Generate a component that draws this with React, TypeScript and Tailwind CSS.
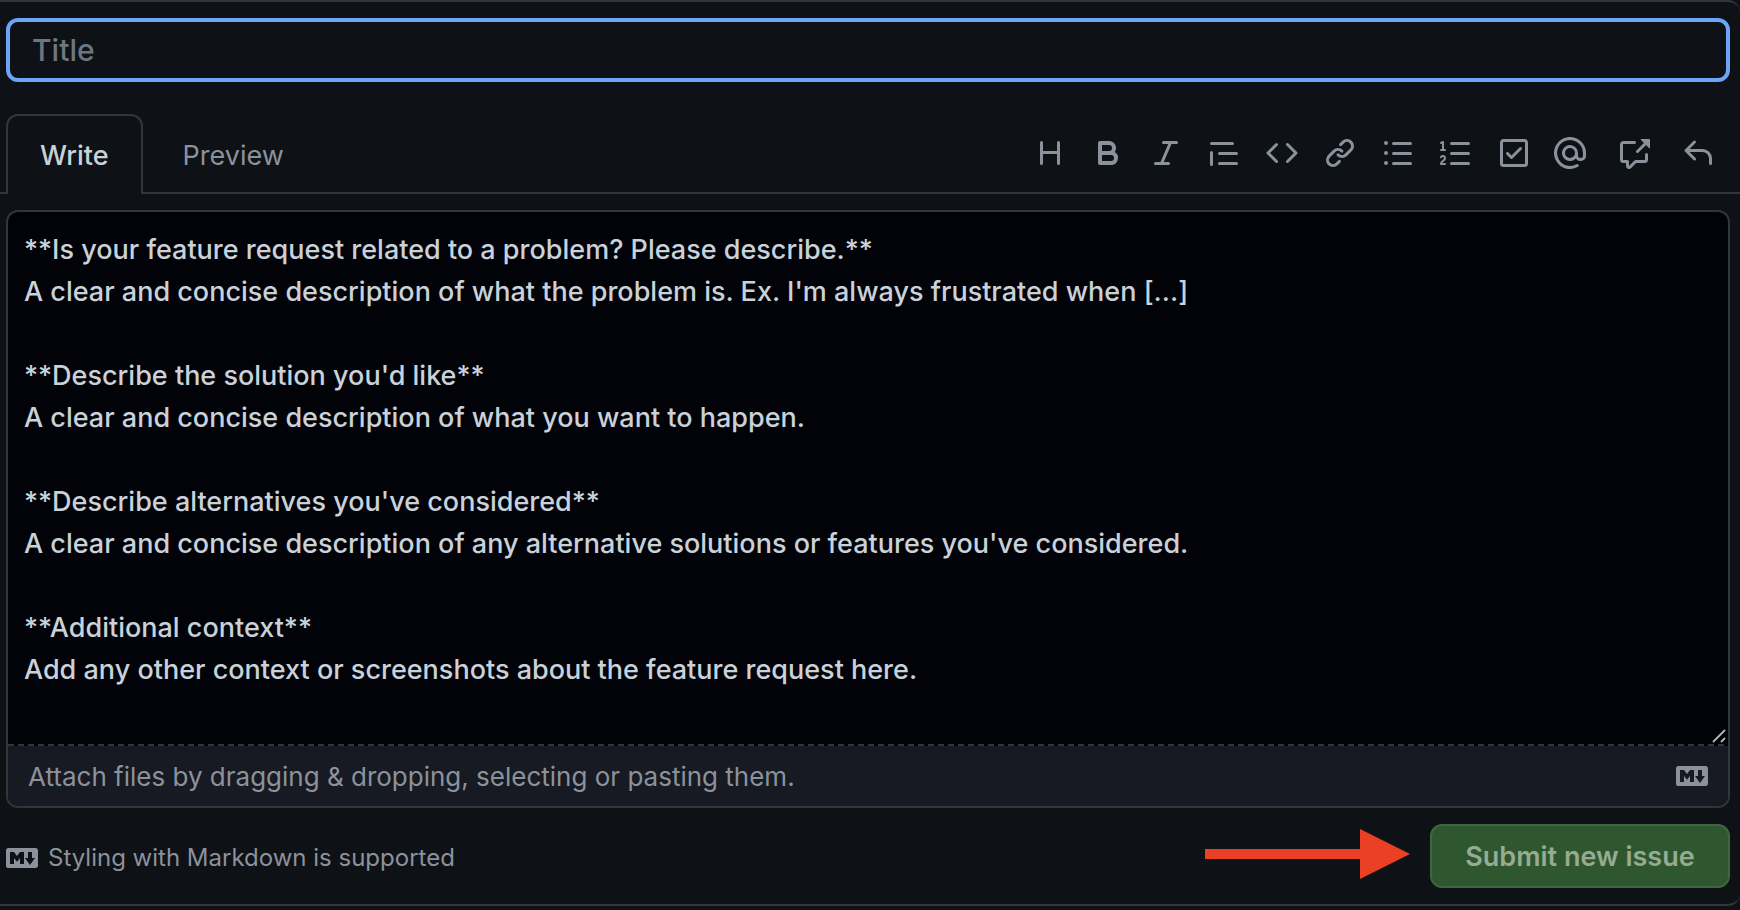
import React from "react";

const icons = {
  heading:
    "M3.75 2a.75.75 0 0 1 .75.75V7h7V2.75a.75.75 0 0 1 1.5 0v10.5a.75.75 0 0 1-1.5 0V8.5h-7v4.75a.75.75 0 0 1-1.5 0V2.75A.75.75 0 0 1 3.75 2Z",
  bold: "M4 2h4.5a3.501 3.501 0 0 1 2.852 5.53A3.499 3.499 0 0 1 9.5 14H4a1 1 0 0 1-1-1V3a1 1 0 0 1 1-1Zm1 7v3h4.5a1.5 1.5 0 0 0 0-3Zm3.5-2a1.5 1.5 0 0 0 0-3H5v3Z",
  italic:
    "M6 2.75A.75.75 0 0 1 6.75 2h6.5a.75.75 0 0 1 0 1.5h-2.505l-3.858 9H9.25a.75.75 0 0 1 0 1.5h-6.5a.75.75 0 0 1 0-1.5h2.505l3.858-9H6.75A.75.75 0 0 1 6 2.75Z",
  quote:
    "M1.75 2.5h10.5a.75.75 0 0 1 0 1.5H1.75a.75.75 0 0 1 0-1.5Zm4 5h8.5a.75.75 0 0 1 0 1.5h-8.5a.75.75 0 0 1 0-1.5Zm0 5h8.5a.75.75 0 0 1 0 1.5h-8.5a.75.75 0 0 1 0-1.5ZM2.5 7.75v6a.75.75 0 0 1-1.5 0v-6a.75.75 0 0 1 1.5 0Z",
  code: "m11.28 3.22 4.25 4.25a.75.75 0 0 1 0 1.06l-4.25 4.25a.749.749 0 0 1-1.275-.326.749.749 0 0 1 .215-.734L13.94 8l-3.72-3.72a.749.749 0 0 1 .326-1.275.749.749 0 0 1 .734.215Zm-6.56 0a.751.751 0 0 1 1.042.018.751.751 0 0 1 .018 1.042L2.06 8l3.72 3.72a.749.749 0 0 1-.326 1.275.749.749 0 0 1-.734-.215L.47 8.53a.75.75 0 0 1 0-1.06Z",
  link: "m7.775 3.275 1.25-1.25a3.5 3.5 0 1 1 4.95 4.95l-2.5 2.5a3.5 3.5 0 0 1-4.95 0 .751.751 0 0 1 .018-1.042.751.751 0 0 1 1.042-.018 1.998 1.998 0 0 0 2.83 0l2.5-2.5a2.002 2.002 0 0 0-2.83-2.83l-1.25 1.25a.751.751 0 0 1-1.042-.018.751.751 0 0 1-.018-1.042Zm-4.69 9.64a1.998 1.998 0 0 0 2.83 0l1.25-1.25a.751.751 0 0 1 1.042.018.751.751 0 0 1 .018 1.042l-1.25 1.25a3.5 3.5 0 1 1-4.95-4.95l2.5-2.5a3.5 3.5 0 0 1 4.95 0 .751.751 0 0 1-.018 1.042.751.751 0 0 1-1.042.018 1.998 1.998 0 0 0-2.83 0l-2.5 2.5a1.998 1.998 0 0 0 0 2.83Z",
  bullets:
    "M5.75 2.5h8.5a.75.75 0 0 1 0 1.5h-8.5a.75.75 0 0 1 0-1.5Zm0 5h8.5a.75.75 0 0 1 0 1.5h-8.5a.75.75 0 0 1 0-1.5Zm0 5h8.5a.75.75 0 0 1 0 1.5h-8.5a.75.75 0 0 1 0-1.5ZM2 14a1 1 0 1 1 0-2 1 1 0 0 1 0 2Zm1-6a1 1 0 1 1-2 0 1 1 0 0 1 2 0ZM2 4a1 1 0 1 1 0-2 1 1 0 0 1 0 2Z",
  numbers:
    "M5 3.25a.75.75 0 0 1 .75-.75h8.5a.75.75 0 0 1 0 1.5h-8.5A.75.75 0 0 1 5 3.25Zm0 5a.75.75 0 0 1 .75-.75h8.5a.75.75 0 0 1 0 1.5h-8.5A.75.75 0 0 1 5 8.25Zm0 5a.75.75 0 0 1 .75-.75h8.5a.75.75 0 0 1 0 1.5h-8.5a.75.75 0 0 1-.75-.75ZM.924 10.32a.5.5 0 0 1-.851-.525l.001-.001.001-.002.002-.004.007-.011c.097-.144.215-.273.348-.384.228-.19.588-.392 1.068-.392.468 0 .858.181 1.126.484.259.294.377.673.377 1.038 0 .987-.686 1.495-1.156 1.845l-.047.035c-.303.225-.522.4-.654.597h1.357a.5.5 0 0 1 0 1H.5a.5.5 0 0 1-.5-.5c0-1.005.692-1.52 1.167-1.875l.035-.025c.531-.396.8-.625.8-1.078a.57.57 0 0 0-.128-.376C1.806 10.068 1.695 10 1.5 10a.658.658 0 0 0-.429.163.835.835 0 0 0-.144.153ZM2.003 2.5V6h.503a.5.5 0 0 1 0 1H.5a.5.5 0 0 1 0-1h.503V3.308l-.28.14a.5.5 0 0 1-.446-.895l1.003-.5a.5.5 0 0 1 .723.447Z",
  task: "M2.75 1h10.5c.966 0 1.75.784 1.75 1.75v10.5A1.75 1.75 0 0 1 13.25 15H2.75A1.75 1.75 0 0 1 1 13.25V2.75C1 1.784 1.784 1 2.75 1ZM2.5 2.75v10.5c0 .138.112.25.25.25h10.5a.25.25 0 0 0 .25-.25V2.75a.25.25 0 0 0-.25-.25H2.75a.25.25 0 0 0-.25.25Zm9.28 3.53-4.5 4.5a.75.75 0 0 1-1.06 0l-2-2a.749.749 0 0 1 .326-1.275.749.749 0 0 1 .734.215l1.47 1.47 3.97-3.97a.751.751 0 0 1 1.042.018.751.751 0 0 1 .018 1.042Z",
  mention:
    "M4.75 2.37a6.501 6.501 0 0 0 6.5 11.26.75.75 0 0 1 .75 1.298A7.999 7.999 0 0 1 .989 4.148 8 8 0 0 1 16 7.75v1.5a2.75 2.75 0 0 1-5.072 1.475 3.999 3.999 0 0 1-6.65-4.19A4 4 0 0 1 12 8v1.25a1.25 1.25 0 0 0 2.5 0V7.867a6.5 6.5 0 0 0-9.75-5.496ZM10.5 8a2.5 2.5 0 1 0-5 0 2.5 2.5 0 0 0 5 0Z",
  reference:
    "M2.75 3.5a.25.25 0 0 0-.25.25v7.5c0 .138.112.25.25.25h2a.75.75 0 0 1 .75.75v2.19l2.72-2.72a.749.749 0 0 1 .53-.22h4.5a.25.25 0 0 0 .25-.25v-2.5a.75.75 0 0 1 1.5 0v2.5A1.75 1.75 0 0 1 13.25 13H9.06l-2.573 2.573A1.458 1.458 0 0 1 4 14.543V13H2.75A1.75 1.75 0 0 1 1 11.25v-7.5C1 2.784 1.784 2 2.75 2h5.5a.75.75 0 0 1 0 1.5ZM16 1.25v4.146a.25.25 0 0 1-.427.177L14.03 4.03l-3.75 3.75a.749.749 0 0 1-1.275-.326.749.749 0 0 1 .215-.734l3.75-3.75-1.543-1.543A.25.25 0 0 1 11.604 1h4.146a.25.25 0 0 1 .25.25Z",
  reply:
    "M6.78 1.97a.75.75 0 0 1 0 1.06L3.81 6h6.44A4.75 4.75 0 0 1 15 10.75v2.5a.75.75 0 0 1-1.5 0v-2.5a3.25 3.25 0 0 0-3.25-3.25H3.81l2.97 2.97a.749.749 0 0 1-.326 1.275.749.749 0 0 1-.734-.215L1.47 7.28a.75.75 0 0 1 0-1.06l4.25-4.25a.75.75 0 0 1 1.06 0Z",
  markdown:
    "M14.85 3c.63 0 1.15.52 1.14 1.15v7.7c0 .63-.51 1.15-1.15 1.15H1.15C.52 13 0 12.48 0 11.84V4.15C0 3.52.52 3 1.15 3ZM9 11V5H7L5.5 7 4 5H2v6h2V8l1.5 1.92L7 8v3Zm2.99.5L14.5 8H13V5h-2v3H9.5Z",
};

type IconName = keyof typeof icons;

function Icon({ name }: { name: IconName }) {
  return (
    <svg viewBox="0 0 16 16" className="size-8 shrink-0" fill="currentColor" aria-hidden="true">
      <path d={icons[name]} />
    </svg>
  );
}

const formatTools: { icon: IconName; label: string }[] = [
  { icon: "heading", label: "Heading" },
  { icon: "bold", label: "Bold" },
  { icon: "italic", label: "Italic" },
  { icon: "quote", label: "Quote" },
  { icon: "code", label: "Code" },
  { icon: "link", label: "Link" },
  { icon: "bullets", label: "Unordered list" },
  { icon: "numbers", label: "Numbered list" },
  { icon: "task", label: "Task list" },
];

const insertTools: { icon: IconName; label: string }[] = [
  { icon: "mention", label: "Mention" },
  { icon: "reference", label: "Reference" },
  { icon: "reply", label: "Saved replies" },
];

const template = `**Is your feature request related to a problem? Please describe.**
A clear and concise description of what the problem is. Ex. I'm always frustrated when [...]

**Describe the solution you'd like**
A clear and concise description of what you want to happen.

**Describe alternatives you've considered**
A clear and concise description of any alternative solutions or features you've considered.

**Additional context**
Add any other context or screenshots about the feature request here.
`;

function ToolButton({ icon, label }: { icon: IconName; label: string }) {
  return (
    <button type="button" aria-label={label} className="block">
      <Icon name={icon} />
    </button>
  );
}

export default function App() {
  return (
    <div className="min-h-screen bg-[#0e1116] font-['Inter','Liberation_Sans',sans-serif] font-[450] text-[#c9d1d9]">
      <form className="rounded-r-xl border-y-2 border-[#32353a] pt-4 pb-4">
        <div className="pr-[10px] pl-[6px]">
          <input
            type="text"
            aria-label="Title"
            placeholder="Title"
            className="block h-16 w-full rounded-xl border-4 border-[#6ca4f8] bg-[#0e1116] px-[22px] text-[30px] outline-none placeholder:text-[#6e7681]"
          />
        </div>

        <div className="mt-8 flex border-b-2 border-[#32353a] pr-[26px] pl-[6px]">
          <div role="tablist" className="-mb-[2px] flex text-[27px] leading-[42px]">
            <button
              type="button"
              role="tab"
              aria-selected="true"
              className="h-20 rounded-t-xl border-2 border-b-0 border-[#32353a] bg-[#0e1116] px-8 pt-[2px]"
            >
              Write
            </button>
            <button
              type="button"
              role="tab"
              aria-selected="false"
              className="h-20 border-t-2 border-transparent px-10 pt-[2px] font-normal text-[#8b929c]"
            >
              Preview
            </button>
          </div>
          <div role="toolbar" aria-label="Formatting" className="ml-auto flex items-center gap-6 text-[#8b929c]">
            <div className="flex gap-[26px]">
              {formatTools.map((tool) => (
                <ToolButton key={tool.icon} {...tool} />
              ))}
            </div>
            <div className="flex gap-8">
              {insertTools.map((tool) => (
                <ToolButton key={tool.icon} {...tool} />
              ))}
            </div>
          </div>
        </div>

        <div className="pt-4 pr-[10px] pl-[6px]">
          <div className="overflow-hidden rounded-xl border-2 border-[#32353a] bg-[#020308]">
            <div className="relative">
              <textarea
                aria-label="Description"
                rows={12}
                defaultValue={template}
                className="block w-full resize-none overflow-hidden px-4 pt-[17px] pb-[11px] text-[27px] leading-[42px] outline-none"
              />
              <svg
                viewBox="0 0 16 16"
                className="absolute right-0 bottom-0 size-4"
                stroke="#b5b5b8"
                strokeWidth="1.8"
                aria-hidden="true"
              >
                <path d="M1 14 13 2M9 14l4-4" />
              </svg>
            </div>
            <div className="h-[2px] bg-[repeating-linear-gradient(90deg,#32353a_0_6px,transparent_6px_10px)]" />
            <label className="flex h-[60px] items-center justify-between bg-[#171a22] px-5 text-[26px] font-normal text-[#8b929c]">
              <span>Attach files by dragging &amp; dropping, selecting or pasting them.</span>
              <input type="file" multiple className="hidden" />
              <Icon name="markdown" />
            </label>
          </div>

          <div className="mt-4 flex items-center">
            <a href="#markdown" className="flex items-center gap-[10px] pt-1 text-[24px] font-normal text-[#8b929c]">
              <Icon name="markdown" />
              Styling with Markdown is supported
            </a>
            <svg viewBox="0 0 205 54" className="mr-5 ml-auto h-[54px] w-[205px]" fill="#ea4025" aria-hidden="true">
              <path d="M0 20h155V0l50 25-50 25V30H0Z" />
            </svg>
            <button
              type="submit"
              disabled
              className="h-16 w-[300px] rounded-xl border-2 border-[#40663f] bg-[#2e572f] pt-[2px] text-[27px] font-semibold text-[#97ab92]"
            >
              Submit new issue
            </button>
          </div>
        </div>
      </form>
    </div>
  );
}
